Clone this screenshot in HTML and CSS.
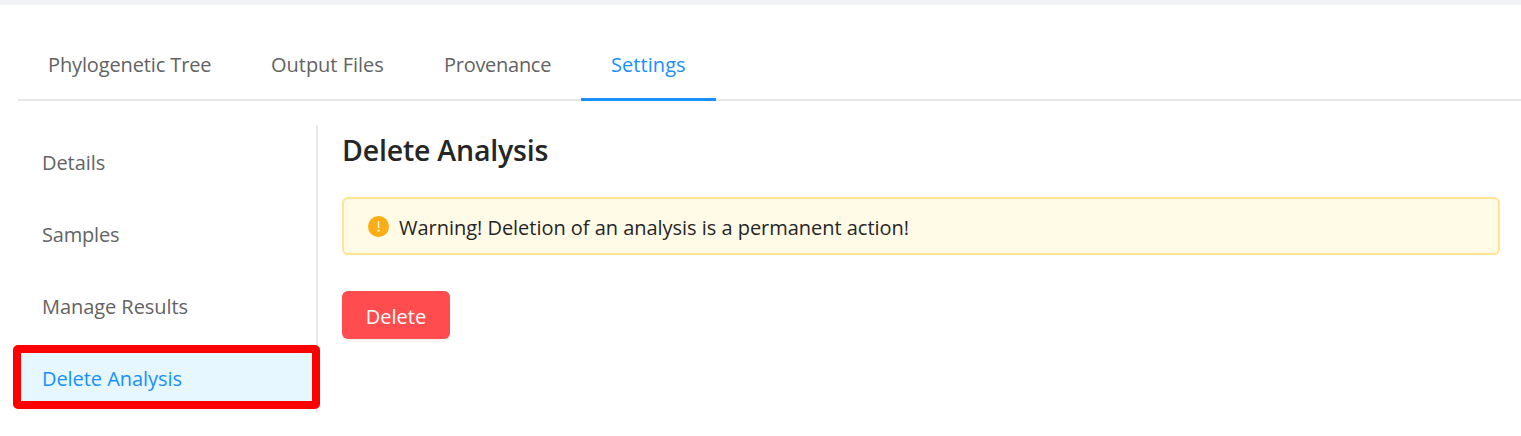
FILE: index.html
```html
<!DOCTYPE html>
<html lang="en">
<head>
<meta charset="utf-8">
<title>Delete Analysis</title>
<link rel="stylesheet" href="styles.css">
</head>
<body>
<main class="page">
  <nav class="tabs">
    <a class="tab tab-tree"><span>Phylogenetic Tree</span></a>
    <a class="tab tab-files"><span>Output Files</span></a>
    <a class="tab tab-provenance"><span>Provenance</span></a>
    <a class="tab tab-settings active"><span>Settings</span></a>
  </nav>
  <div class="body">
    <aside class="menu">
      <a class="item">Details</a>
      <a class="item samples">Samples</a>
      <a class="item">Manage Results</a>
      <a class="item selected">Delete Analysis<span class="highlight"></span></a>
    </aside>
    <section class="content">
      <h1 class="title">Delete Analysis</h1>
      <div class="alert">
        <svg class="alert-icon" viewBox="64 64 896 896"><circle cx="512" cy="512" r="448" fill="#faad14"/><path fill="#fffbe6" d="M480 296c0-4.400 3.600-8 8-8h48c4.400 0 8 3.600 8 8v272c0 4.400-3.600 8-8 8h-48c-4.400 0-8-3.600-8-8V296z"/><circle cx="512" cy="688" r="48" fill="#fffbe6"/></svg>
        <span>Warning! Deletion of an analysis is a permanent action!</span>
      </div>
      <button class="delete">Delete</button>
    </section>
  </div>
</main>
</body>
</html>
```
FILE: styles.css
```css
* { box-sizing: border-box; }
body {
  margin: 0;
  height: 436px;
  overflow: hidden;
  background: #fff;
  color: #262626;
  font: 400 20px/30px "Open Sans", "Noto Sans", sans-serif;
}
.page { border-top: 5px solid #f0f2f5; padding-left: 18px; }
.tabs {
  display: flex;
  height: 96px;
  border-bottom: 2px solid #e8e8e8;
}
.tab {
  height: 96px;
  padding: 45px 0 0 30px;
  color: #636363;
  white-space: nowrap;
}
.tab-tree { width: 223px; letter-spacing: -.13px; }
.tab-files { width: 173px; letter-spacing: -.02px; }
.tab-provenance { width: 167px; letter-spacing: -.28px; }
.tab-settings { width: 135px; letter-spacing: .07px; }
.tab.active { color: #1890ff; border-bottom: 3px solid #1890ff; }
.body { display: flex; padding-top: 24px; }
.menu {
  width: 300px;
  height: 288px;
  padding: 6px 0;
  border-right: 2px solid #e8e8e8;
  display: flex;
  flex-direction: column;
  gap: 12px;
}
.item {
  position: relative;
  height: 60px;
  padding-left: 24px;
  line-height: 64px;
  letter-spacing: -.06px;
  color: #636363;
  white-space: nowrap;
}
.samples { letter-spacing: -.2px; }
.item.selected { background: #e6f7ff; color: #1890ff; }
.highlight {
  position: absolute;
  left: -5px;
  top: -2px;
  width: 307px;
  height: 64px;
  border: 8px solid #f00;
  border-radius: 5px;
}
.content { flex: 1; padding: 0 21px 0 24px; }
.title { margin: 3px 0 0; font-size: 28.5px; line-height: 44px; font-weight: 600; letter-spacing: -.2px; }
.alert {
  display: flex;
  align-items: center;
  height: 58px;
  margin-top: 25px;
  padding: 4px 0 0 24px;
  border: 2px solid #ffe58f;
  border-radius: 6px;
  background: #fffbe6;
  letter-spacing: -.03px;
}
.alert-icon { width: 21px; height: 21px; margin: -4px 10px 0 0; }
.delete {
  display: block;
  width: 108px;
  height: 48px;
  margin-top: 36px;
  padding: 3px 0 0;
  border: 0;
  border-radius: 6px;
  background: #ff4d4f;
  box-shadow: 0 3px 0 rgba(0, 0, 0, .045);
  color: #fff;
  font: inherit;
}
```
